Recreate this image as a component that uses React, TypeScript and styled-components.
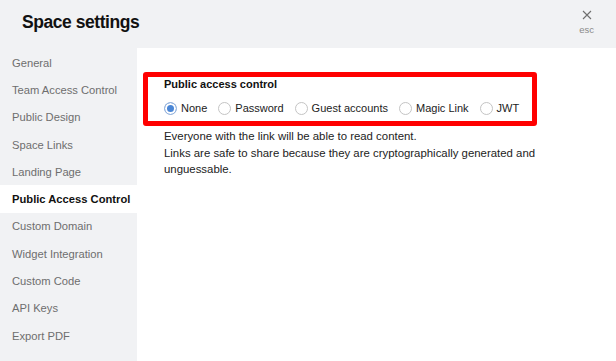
import styled, { createGlobalStyle } from 'styled-components';

const GlobalStyle = createGlobalStyle`
  html, body {
    margin: 0;
    padding: 0;
    background: #f1f2f4;
    font-family: 'Liberation Sans', Arial, sans-serif;
  }
  * {
    box-sizing: border-box;
  }
`;

const Modal = styled.div`
  width: 616px;
  height: 361px;
  display: grid;
  grid-template-columns: 137px 1fr;
  grid-template-rows: 48px 1fr;
  background: #f1f2f4;
  overflow: hidden;
`;

const Header = styled.div`
  grid-column: 1 / 3;
  display: flex;
  align-items: center;
  justify-content: space-between;
  padding: 0 22px 0 22px;
`;

const Title = styled.h1`
  margin: 0;
  font-size: 17.5px;
  font-weight: 700;
  letter-spacing: -0.45px;
  color: #111;
  line-height: 20px;
  margin-top: -4px;
`;

const Close = styled.div`
  display: flex;
  flex-direction: column;
  align-items: center;
  gap: 5px;
  margin-top: -4px;
  color: #777;
  cursor: pointer;

  span {
    font-size: 9.5px;
    line-height: 10px;
    color: #8a8a8a;
  }
`;

const Sidebar = styled.nav`
  display: flex;
  flex-direction: column;
  padding-top: 1px;
`;

const NavItem = styled.div<{ $active?: boolean }>`
  height: 27.3px;
  display: flex;
  align-items: center;
  padding-left: 12px;
  font-size: 11.2px;
  color: ${(p) => (p.$active ? '#111' : '#6e6e6e')};
  font-weight: ${(p) => (p.$active ? 700 : 400)};
  background: ${(p) => (p.$active ? '#fff' : 'transparent')};
`;

const Panel = styled.main`
  background: #fff;
  padding: 24px 0 0 6px;
`;

const Highlight = styled.div`
  width: 394px;
  border: 5px solid #ff0000;
  border-radius: 3px;
  padding: 0 12px 6px 16px;
`;

const FieldTitle = styled.div`
  font-size: 11px;
  font-weight: 700;
  line-height: 14px;
  color: #111;
  margin-bottom: 10px;
`;

const RadioRow = styled.div`
  display: flex;
  align-items: center;
  gap: 11px;
`;

const RadioLabel = styled.label`
  display: flex;
  align-items: center;
  gap: 4px;
  font-size: 11px;
  line-height: 14px;
  color: #222;
`;

const Circle = styled.span<{ $checked?: boolean }>`
  width: 13px;
  height: 13px;
  border-radius: 50%;
  border: 1px solid ${(p) => (p.$checked ? '#9bb6dc' : '#c4c4c4')};
  background: ${(p) => (p.$checked ? '#4a86d6' : '#fff')};
  box-shadow: ${(p) => (p.$checked ? 'inset 0 0 0 2px #fff' : 'none')};
`;

const Description = styled.div`
  margin: 2px 0 0 21px;
  max-width: 400px;
  font-size: 11.4px;
  line-height: 16.5px;
  color: #222;

  p {
    margin: 0;
  }
`;

const navItems = [
  'General',
  'Team Access Control',
  'Public Design',
  'Space Links',
  'Landing Page',
  'Public Access Control',
  'Custom Domain',
  'Widget Integration',
  'Custom Code',
  'API Keys',
  'Export PDF',
];

const options = ['None', 'Password', 'Guest accounts', 'Magic Link', 'JWT'];

export default function App() {
  return (
    <>
      <GlobalStyle />
      <Modal>
        <Header>
          <Title>Space settings</Title>
          <Close>
            <svg width="10" height="10" viewBox="0 0 10 10">
              <path d="M1 1 L9 9 M9 1 L1 9" stroke="#6f6f6f" strokeWidth="1.1" fill="none" />
            </svg>
            <span>esc</span>
          </Close>
        </Header>
        <Sidebar>
          {navItems.map((item) => (
            <NavItem key={item} $active={item === 'Public Access Control'}>
              {item}
            </NavItem>
          ))}
        </Sidebar>
        <Panel>
          <Highlight>
            <FieldTitle>Public access control</FieldTitle>
            <RadioRow>
              {options.map((opt) => (
                <RadioLabel key={opt}>
                  <Circle $checked={opt === 'None'} />
                  {opt}
                </RadioLabel>
              ))}
            </RadioRow>
          </Highlight>
          <Description>
            <p>Everyone with the link will be able to read content.</p>
            <p>
              Links are safe to share because they are cryptographically generated and
              unguessable.
            </p>
          </Description>
        </Panel>
      </Modal>
    </>
  );
}
